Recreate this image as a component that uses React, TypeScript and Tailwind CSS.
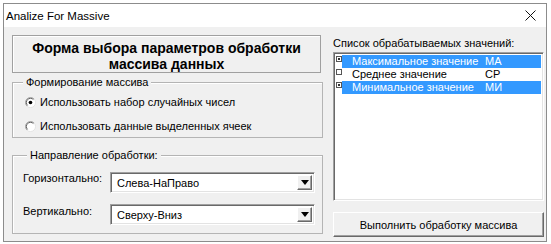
import React from "react";

const Radio = ({ checked }: { checked?: boolean }) => (
  <svg width="11" height="11" viewBox="0 0 12 12" className="shrink-0">
    <circle cx="6" cy="6" r="5.5" fill="#ffffff" />
    <path d="M2.1 9.9 A5.5 5.5 0 0 1 9.9 2.1" stroke="#a0a0a0" strokeWidth="1" fill="none" />
    <path d="M2.8 9.2 A4.5 4.5 0 0 1 9.2 2.8" stroke="#555555" strokeWidth="1" fill="none" />
    <path d="M9.9 2.1 A5.5 5.5 0 0 1 2.1 9.9" stroke="#e3e3e3" strokeWidth="1" fill="none" />
    {checked && <circle cx="6" cy="6" r="2" fill="#000000" />}
  </svg>
);

const Combo = ({ value }: { value: string }) => (
  <div className="flex h-[21px] w-[205px] border-t border-l border-t-[#a0a0a0] border-l-[#a0a0a0] border-b border-r border-b-[#ffffff] border-r-[#ffffff] bg-white shadow-[inset_1px_1px_0_#696969,inset_-1px_-1px_0_#e3e3e3]">
    <div className="flex flex-1 items-center pl-[6px] pt-[1px] text-[11px] leading-[14px] text-black">{value}</div>
    <div className="my-[2px] mr-[2px] flex w-[15px] items-center justify-center bg-[#f0f0f0] border-t border-l border-t-[#ffffff] border-l-[#ffffff] border-b border-r border-b-[#696969] border-r-[#696969] shadow-[inset_-1px_-1px_0_#a0a0a0]">
      <svg width="8" height="5" viewBox="0 0 8 5">
        <path d="M0 0 H8 L4 5 Z" fill="#000" />
      </svg>
    </div>
  </div>
);

const Check = ({ checked }: { checked?: boolean }) => (
  <div className="flex w-[7px] shrink-0 justify-start pl-[1px] pt-[1px]">
    <div className="flex h-[6px] w-[6px] items-center justify-center border border-[#555555] bg-white">
      {checked && <div className="h-[2px] w-[2px] bg-[#333333]" />}
    </div>
  </div>
);

const Row = ({ name, code, checked, sel }: { name: string; code: string; checked?: boolean; sel?: boolean }) => (
  <div className="flex h-[13px]">
    <Check checked={checked} />
    <div className={`flex flex-1 items-center pl-[10px] text-[11px] leading-[13px] ${sel ? "bg-[#3399ff] text-white" : "bg-white text-black"}`}>
      <span className="w-[133px] shrink-0">{name}</span>
      <span>{code}</span>
    </div>
  </div>
);

export default function App() {
  return (
    <div className="h-[244px] w-[551px] bg-white p-[3px] font-['Liberation_Sans',Arial,sans-serif]">
      <div className="flex h-[239px] w-[544px] flex-col border border-[#8c8c8c] bg-[#f0f0f0]">
        <div className="flex h-[23px] items-center justify-between bg-white pl-[2px] pr-[10px]">
          <span className="text-[11.5px] leading-[16px] text-black">Analize For Massive</span>
          <svg width="11" height="11" viewBox="0 0 11 11">
            <path d="M0.5 0.5 L10.5 10.5 M10.5 0.5 L0.5 10.5" stroke="#111" strokeWidth="1" />
          </svg>
        </div>
        <div className="flex flex-1">
          <div className="ml-[8px] flex w-[311px] flex-col pt-[8px]">
            <div className="h-[38px] w-[309px] border border-[#a0a0a0] pt-[4px] text-center text-[14px] font-bold leading-[16px] text-black shadow-[inset_1px_1px_0_#ffffff]">
              Форма выбора параметров обработки
              <br />
              массива данных
            </div>
            <div className="relative mt-[9px] h-[56px] border border-[#b4b4b4] pl-[12px] pt-[12px] shadow-[inset_1px_1px_0_#ffffff]">
              <span className="absolute left-[10px] top-[-8px] bg-[#f0f0f0] px-[3px] text-[11px] leading-[14px] text-black">
                Формирование массива
              </span>
              <div className="flex h-[14px] items-center gap-[4px] text-[11px] leading-[14px] text-black">
                <Radio checked />
                <span>Использовать набор случайных чисел</span>
              </div>
              <div className="mt-[10px] flex h-[14px] items-center gap-[4px] text-[11px] leading-[14px] text-black">
                <Radio />
                <span>Использовать данные выделенных ячеек</span>
              </div>
            </div>
            <div className="relative mt-[17px] h-[79px] border border-[#b4b4b4] pl-[10px] pt-[16px] shadow-[inset_1px_1px_0_#ffffff]">
              <span className="absolute left-[14px] top-[-8px] bg-[#f0f0f0] px-[3px] text-[11px] leading-[14px] text-black">
                Направление обработки:
              </span>
              <div className="flex items-start">
                <span className="mt-[-1px] w-[87px] text-[11px] leading-[14px] text-black">Горизонтально:</span>
                <Combo value="Слева-НаПраво" />
              </div>
              <div className="mt-[11px] flex items-start">
                <span className="w-[87px] text-[11px] leading-[14px] text-black">Вертикально:</span>
                <Combo value="Сверху-Вниз" />
              </div>
            </div>
          </div>
          <div className="ml-[10px] flex w-[211px] flex-col pt-[9px]">
            <span className="text-[11px] leading-[14px] text-black">Список обрабатываемых значений:</span>
            <div className="mt-[2px] h-[149px] border-t border-l border-t-[#a0a0a0] border-l-[#a0a0a0] border-b border-r border-b-[#ffffff] border-r-[#ffffff] bg-white p-[1px] shadow-[inset_1px_1px_0_#696969,inset_-1px_-1px_0_#e3e3e3]">
              <div className="pt-[1px] pr-[1px]">
                <Row name="Максимальное значение" code="МА" checked sel />
                <Row name="Среднее значение" code="СР" />
                <Row name="Минимальное значение" code="МИ" checked sel />
              </div>
            </div>
            <div className="mt-[11px] flex h-[25px] items-center justify-center border-t border-l border-t-[#ffffff] border-l-[#ffffff] border-b border-r border-b-[#696969] border-r-[#696969] bg-[#f0f0f0] text-[11px] leading-[14px] text-black shadow-[inset_-1px_-1px_0_#a0a0a0]">
              Выполнить обработку массива
            </div>
          </div>
        </div>
      </div>
    </div>
  );
}
